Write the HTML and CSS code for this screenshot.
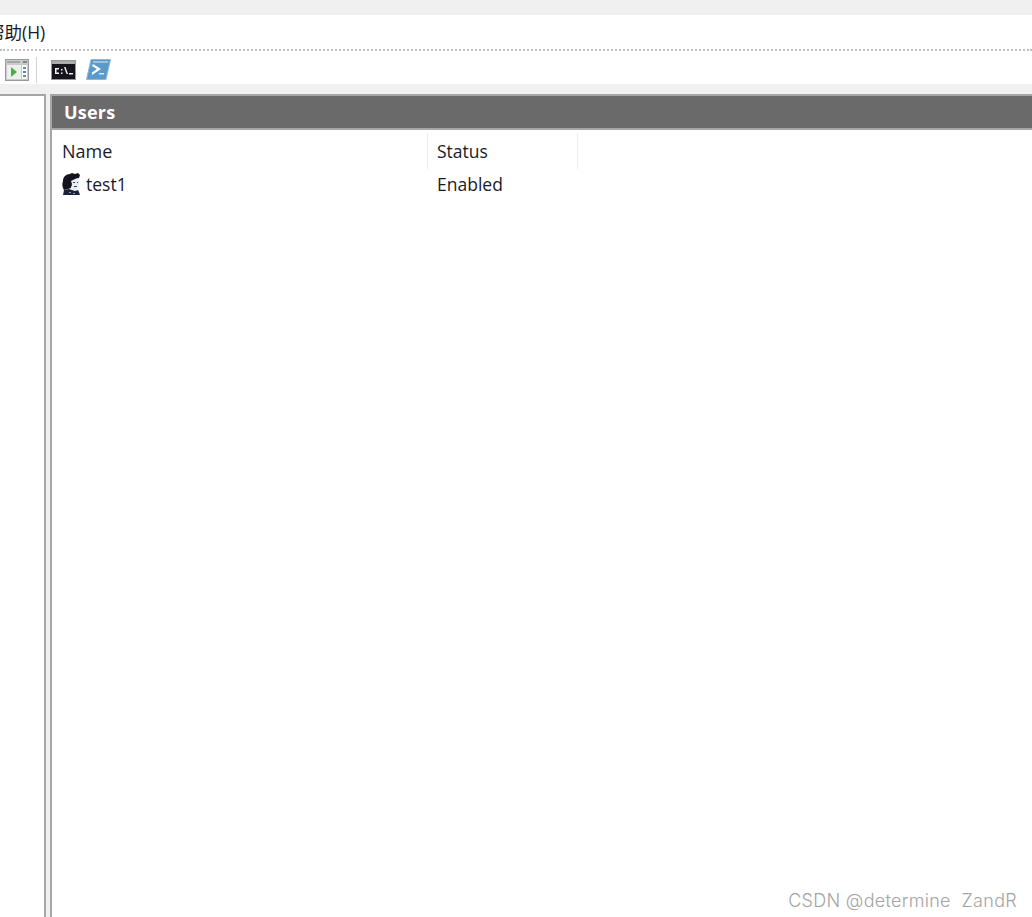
FILE: index.html
```html
<!DOCTYPE html>
<html lang="en">
<head>
    <meta charset="UTF-8">
    <title>Computer Management</title>
    <link rel="stylesheet" href="styles.css">
</head>
<body>
    <div class="title-strip"></div>
    <nav class="menu-bar">
        <span class="menu-item">帮助(H)</span>
    </nav>
    <div class="toolbar">
        <svg class="tool-icon" width="24" height="22" viewBox="0 0 24 22">
            <rect x="0.500" y="0.500" width="23" height="21" fill="#c8cbcb" stroke="#979b9b"/>
            <rect x="2" y="2" width="13" height="2" fill="#a2a6a6"/>
            <rect x="18" y="2" width="4" height="2" fill="#808484"/>
            <rect x="2" y="6" width="14" height="14" fill="#eef0ee"/>
            <rect x="17" y="6" width="5" height="14" fill="#fff"/>
            <path d="M6 8l6 5-6 5z" fill="#46b23f"/>
            <path d="M18 8h3v2h-3zM18 12h3v2h-3zM18 16h3v2h-3z" fill="#5a8bb0"/>
        </svg>
        <div class="tool-sep"></div>
        <svg class="tool-icon" width="25" height="20" viewBox="0 0 25 20">
            <rect x="0.500" y="0.500" width="24" height="19" fill="#14141a" stroke="#94989b"/>
            <rect x="1" y="1" width="23" height="3" fill="#a9adb0"/>
            <path d="M4 8h4v1.500h-2.500v3h2.500v1.500h-4zM10 9h1.500v1.500h-1.500zM10 12.500h1.500v1.500h-1.500zM13 7h1.500l2.500 7h-1.500zM18 13h4v1.500h-4z" fill="#f2f2f2"/>
        </svg>
        <svg class="tool-icon" width="25" height="21" viewBox="0 0 25 21">
            <path d="M5 .5h19.500l-4.500 20h-19.500z" fill="#5a9acb" stroke="#8fb6d6"/>
            <rect x="7" y="2" width="15" height="2" fill="#9cc3e0"/>
            <path d="M7 5l8 5-9 6v-2.500l5-3.500-5-3z" fill="#fff"/>
            <path d="M13 14h5v1.500h-5z" fill="#dce9f3"/>
        </svg>
    </div>
    <div class="band"></div>
    <div class="workspace">
        <aside class="tree-pane"></aside>
        <main class="users-pane">
            <h1 class="pane-title">Users</h1>
            <div class="list-head">
                <div class="col col-name">Name</div>
                <div class="col col-status">Status</div>
            </div>
            <div class="list-row">
                <div class="col col-name">
                    <svg class="user-icon" width="18" height="22" viewBox="0 0 18 22">
                        <path d="M2 17C0 14 0 11 1 8 1 4 4 1 8 1l2-1 3 1 3-1 2 2-1 3-3 1-3 2-1 4-1 3-3 1z" fill="#14141c"/>
                        <path d="M9 8l4-2 3-1 1 3v5l-2 3-3 1-3-2 1-4z" fill="#e8edf3"/>
                        <path d="M11 9h2v1h-2zM15 9h1v1h-1zM12 13h3v1h-3zM9 11h1v2H9z" fill="#39435a"/>
                        <path d="M2 17l5-1 3 1 3 1 3-1 1 2 1 3H1z" fill="#1c2238"/>
                        <path d="M7 19h2v1H7zM11 20h2v1h-2z" fill="#8e9ab8"/>
                    </svg>
                    <span>test1</span>
                </div>
                <div class="col col-status">Enabled</div>
            </div>
        </main>
    </div>
    <div class="watermark">CSDN @determine&nbsp;&nbsp;ZandR</div>
</body>
</html>
```

FILE: styles.css
```css
* {
    box-sizing: border-box;
    margin: 0;
    padding: 0;
}

html, body {
    height: 100%;
}

body {
    position: relative;
    display: flex;
    flex-direction: column;
    overflow: hidden;
    background: #f0f0f0;
    color: #1a1a2a;
    font-family: "Open Sans", "Noto Sans CJK SC", sans-serif;
    font-size: 17.500px;
}

/* top of the window */
.title-strip {
    height: 15px;
    background: #f0f0f0;
}

.menu-bar {
    height: 36px;
    padding-top: 5px;
    overflow: hidden;
    background: #fff;
    border-bottom: 2px dotted #c0c0c0;
}

.menu-item {
    display: block;
    margin-left: -13px;
    font-size: 17.500px;
    line-height: 24px;
    white-space: nowrap;
}

.toolbar {
    display: flex;
    align-items: center;
    height: 33px;
    padding: 4px 0 0 5px;
    background: #fff;
}

.tool-icon {
    flex: none;
    margin-right: 10px;
}

.tool-sep {
    width: 1px;
    height: 26px;
    margin: 0 14px 0 -3px;
    background: #d4d4d4;
}

.band {
    height: 10px;
    background: #f0f0f0;
}

/* panes */
.workspace {
    flex: 1;
    display: flex;
    gap: 4px;
    min-height: 0;
}

.tree-pane {
    width: 46px;
    background: #fff;
    border-top: 2px solid #a6a6a6;
    border-right: 2px solid #a6a6a6;
}

.users-pane {
    flex: 1;
    background: #fff;
    border-top: 2px solid #a6a6a6;
    border-left: 2px solid #a6a6a6;
}

.pane-title {
    height: 32px;
    padding-left: 12px;
    background: #6a6a6a;
    color: #fff;
    font-size: 18px;
    font-weight: 700;
    letter-spacing: 0.200px;
    line-height: 32px;
}

.list-head {
    display: flex;
    height: 39px;
    padding-top: 3px;
    border-top: 2px solid #a6a6a6;
    line-height: 36px;
}

.list-row {
    display: flex;
    height: 32px;
    padding-top: 2px;
    line-height: 30px;
}

.col {
    padding-left: 10px;
}

.col-name {
    display: flex;
    align-items: center;
    gap: 6px;
    width: 376px;
}

.list-head .col-name {
    font-size: 18px;
}

.col-status {
    width: 150px;
    padding-left: 9px;
}

.list-head .col {
    height: 36px;
    border-right: 1px solid #ececec;
}

.user-icon {
    flex: none;
}

.watermark {
    position: absolute;
    right: 15px;
    bottom: 6px;
    color: #a4a4a4;
    font-family: "Inter", "Liberation Sans", sans-serif;
    font-size: 18px;
    font-weight: 300;
    letter-spacing: 0.300px;
}
```
